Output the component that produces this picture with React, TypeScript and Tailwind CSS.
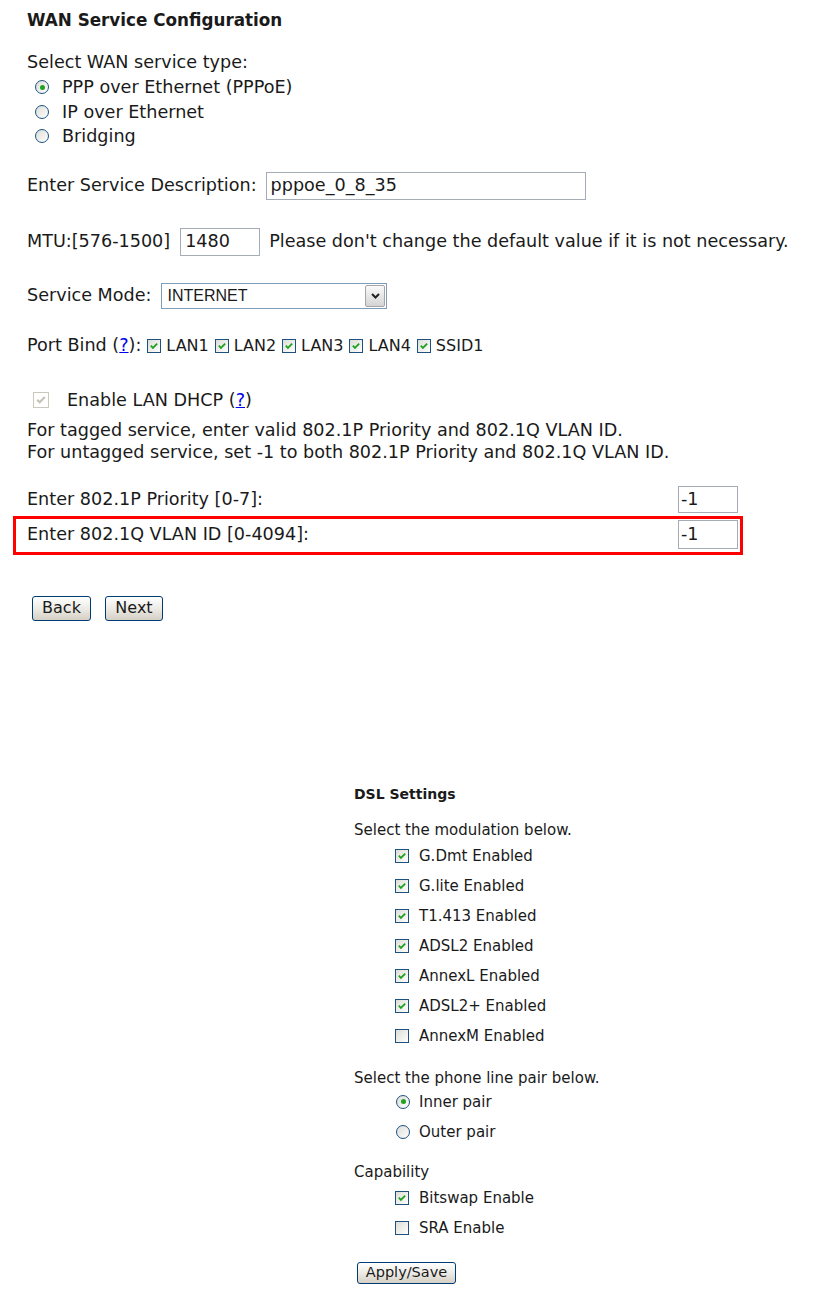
import React from 'react'

const mods = [
  { label: 'G.Dmt Enabled', on: true },
  { label: 'G.lite Enabled', on: true },
  { label: 'T1.413 Enabled', on: true },
  { label: 'ADSL2 Enabled', on: true },
  { label: 'AnnexL Enabled', on: true },
  { label: 'ADSL2+ Enabled', on: true },
  { label: 'AnnexM Enabled', on: false },
]

function Check({ on, size = 13, disabled = false }: { on: boolean; size?: number; disabled?: boolean }) {
  const border = disabled ? 'border-[#cac8bb]' : 'border-[#1c5180]'
  const bg = disabled ? 'bg-white' : 'bg-gradient-to-br from-[#dcdcd7] to-white'
  return (
    <span
      className={`inline-flex shrink-0 items-center justify-center border ${border} ${bg}`}
      style={{ width: size, height: size }}
    >
      {on && (
        <svg viewBox="0 0 11 11" width={size - 4} height={size - 4}>
          <path
            d="M2 5.2 L4.3 7.6 L9 2.8"
            fill="none"
            stroke={disabled ? '#c4c3b8' : '#21a121'}
            strokeWidth="2"
          />
        </svg>
      )}
    </span>
  )
}

function Radio({ on, size = 13 }: { on: boolean; size?: number }) {
  return (
    <span
      className="inline-flex shrink-0 items-center justify-center rounded-full border border-[#1c5180] bg-gradient-to-br from-[#dcdcd7] to-white"
      style={{ width: size, height: size }}
    >
      {on && <span className="h-[5px] w-[5px] rounded-full bg-[#21a121]" />}
    </span>
  )
}

function Button({ children, w }: { children: React.ReactNode; w: string }) {
  return (
    <button
      className={`${w} rounded-[3px] border border-[#003c74] bg-gradient-to-b from-white via-[#ecebe6] to-[#d6d0c5] text-center leading-none`}
    >
      {children}
    </button>
  )
}

function Help() {
  return <span className="text-[#0000ee] underline">?</span>
}

export default function App() {
  return (
    <div className="h-[1299px] w-[814px] bg-white [font-family:'DejaVu_Sans',sans-serif] text-[#1a1a1a]">
      {/* WAN service section */}
      <div className="pl-[27px] pt-[11px] text-[17.6px]">
        <h1 className="text-[16.8px] font-bold leading-[18px]">WAN Service Configuration</h1>
        <p className="mt-[21px] leading-[24px]">Select WAN service type:</p>
        <div className="ml-[8px] mt-[1px]">
          {['PPP over Ethernet (PPPoE)', 'IP over Ethernet', 'Bridging'].map((t, i) => (
            <div key={t} className="flex h-[24.5px] items-center gap-[13px]">
              <Radio on={i === 0} size={14} />
              <span>{t}</span>
            </div>
          ))}
        </div>

        <div className="mt-[23px] flex h-[28px] items-center gap-[9px]">
          <span>Enter Service Description:</span>
          <div className="flex h-[28px] w-[320px] items-center border border-[#a5acb5] px-[4px]">pppoe_0_8_35</div>
        </div>

        <div className="mt-[28px] flex h-[28px] items-center">
          <span>MTU:[576-1500]</span>
          <div className="ml-[10px] flex h-[28px] w-[80px] items-center border border-[#a5acb5] px-[4px]">1480</div>
          <span className="ml-[9px]">Please don't change the default value if it is not necessary.</span>
        </div>

        <div className="mt-[27px] flex h-[26px] items-center gap-[10px]">
          <span>Service Mode:</span>
          <div className="flex h-[26px] w-[226px] items-center justify-between border border-[#7f9db9] pl-[5px] pr-[1px] [font-family:'Liberation_Sans',sans-serif] text-[16px]">
            <span>INTERNET</span>
            <span className="flex h-[22px] w-[20px] items-center justify-center rounded-[2px] border border-[#a6a6a6] bg-gradient-to-b from-[#fafafa] to-[#d4d4d4]">
              <svg viewBox="0 0 9 6" width="9" height="6">
                <path d="M1 1 L4.5 4.5 L8 1" fill="none" stroke="#222" strokeWidth="2" />
              </svg>
            </span>
          </div>
        </div>

        <div className="mt-[25px] flex h-[24px] items-center">
          <span>
            Port Bind (<Help />):
          </span>
          {['LAN1', 'LAN2', 'LAN3', 'LAN4', 'SSID1'].map((p) => (
            <span key={p} className="ml-[6px] flex items-center gap-[5px] text-[16px]">
              <Check on size={14} />
              <span>{p}</span>
            </span>
          ))}
        </div>

        <div className="mt-[31px] flex h-[24px] items-center">
          <span className="ml-[6px]">
            <Check on disabled size={16} />
          </span>
          <span className="ml-[18px]">
            Enable LAN DHCP (<Help />)
          </span>
        </div>

        <div className="mt-[6px] leading-[22px]">
          <p>For tagged service, enter valid 802.1P Priority and 802.1Q VLAN ID.</p>
          <p>For untagged service, set -1 to both 802.1P Priority and 802.1Q VLAN ID.</p>
        </div>

        <div className="mt-[23px] flex h-[27px] w-[711px] items-center justify-between">
          <span>Enter 802.1P Priority [0-7]:</span>
          <div className="flex h-[27px] w-[60px] items-center border border-[#a5acb5] px-[2px]">-1</div>
        </div>

        <div className="-ml-[14px] mt-[3px] flex h-[39px] w-[730px] items-center justify-between border-[3px] border-[#ff0000] pb-[2px] pl-[11px] pr-[2px]">
          <span>Enter 802.1Q VLAN ID [0-4094]:</span>
          <div className="flex h-[29px] w-[60px] items-center border border-[#a5acb5] px-[2px]">-1</div>
        </div>

        <div className="ml-[5px] mt-[41px] flex gap-[14px] text-[16px]">
          <Button w="h-[25px] w-[59px]">Back</Button>
          <Button w="h-[25px] w-[58px]">Next</Button>
        </div>
      </div>

      {/* DSL settings section */}
      <div className="ml-[354px] mt-[165px] text-[15px] leading-[16px]">
        <h2 className="text-[14px] font-bold">DSL Settings</h2>
        <p className="mt-[20px]">Select the modulation below.</p>
        <div className="mt-[3px] ml-[41px]">
          {mods.map((m) => (
            <div key={m.label} className="flex h-[30px] items-center gap-[10px]">
              <Check on={m.on} size={14} />
              <span>{m.label}</span>
            </div>
          ))}
        </div>

        <p className="mt-[19px]">Select the phone line pair below.</p>
        <div className="ml-[42px] mt-[1px]">
          {['Inner pair', 'Outer pair'].map((t, i) => (
            <div key={t} className="flex h-[30px] items-center gap-[9px]">
              <Radio on={i === 0} size={14} />
              <span>{t}</span>
            </div>
          ))}
        </div>

        <p className="mt-[17px]">Capability</p>
        <div className="mt-[3px] ml-[41px]">
          {[
            { label: 'Bitswap Enable', on: true },
            { label: 'SRA Enable', on: false },
          ].map((m) => (
            <div key={m.label} className="flex h-[30px] items-center gap-[10px]">
              <Check on={m.on} size={14} />
              <span>{m.label}</span>
            </div>
          ))}
        </div>

        <div className="ml-[3px] mt-[19px] text-[14.5px]">
          <Button w="h-[22px] w-[99px]">Apply/Save</Button>
        </div>
      </div>
    </div>
  )
}
